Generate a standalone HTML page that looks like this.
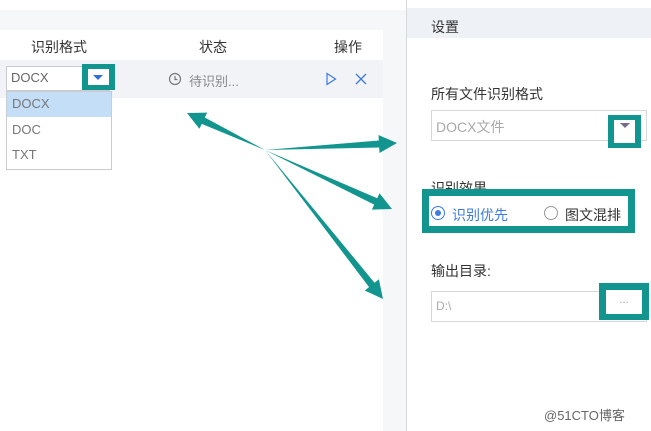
<!DOCTYPE html>
<html><head><meta charset="utf-8"><style>
*{margin:0;padding:0;box-sizing:border-box}
body{width:651px;height:431px;overflow:hidden;background:#fff;position:relative;font-family:"Liberation Sans","Noto Sans CJK SC",sans-serif;font-size:13px;color:#333}
.a{position:absolute}
</style></head><body>
<div class="a" style="left:0;top:10px;width:405px;height:20px;background:#f6f7f9"></div>
<div class="a" style="left:383px;top:10px;width:23px;height:421px;background:#f6f7f9"></div>
<div class="a" style="left:406px;top:0;width:1px;height:431px;background:#d6d8dc"></div>
<div class="a" style="left:0;top:60px;width:383px;height:38px;background:#f1f3f7"></div>
<div class="a" style="left:31px;top:37px;font-size:14px">识别格式</div>
<div class="a" style="left:199px;top:37px;font-size:14px">状态</div>
<div class="a" style="left:334px;top:37px;font-size:14px">操作</div>
<div class="a" style="left:6px;top:66px;width:104px;height:25px;background:#fff;border:1px solid #c9ccd2"></div>
<div class="a" style="left:11px;top:70px;color:#666">DOCX</div>
<div class="a" style="left:82px;top:64px;width:33px;height:26px;background:#12958f"></div>
<div class="a" style="left:88px;top:69px;width:21px;height:16px;background:#fff"></div>
<div class="a" style="left:93px;top:75px;width:0;height:0;border-left:5px solid transparent;border-right:5px solid transparent;border-top:5px solid #2f6fd8"></div>
<div class="a" style="left:6px;top:91px;width:106px;height:79px;border:1px solid #c9ccd2;background:#fff"></div>
<div class="a" style="left:7px;top:92px;width:104px;height:25px;background:#c4def7"></div>
<div class="a" style="left:12px;top:96px;color:#777">DOCX</div>
<div class="a" style="left:12px;top:122px;color:#777">DOC</div>
<div class="a" style="left:12px;top:147px;color:#777">TXT</div>
<svg class="a" style="left:168px;top:72px" width="14" height="14"><circle cx="7" cy="7" r="5.5" fill="none" stroke="#777" stroke-width="1.2"/><path d="M7 4v3.5h2.5" fill="none" stroke="#777" stroke-width="1.2"/></svg>
<div class="a" style="left:189px;top:71px;color:#888">待识别...</div>
<svg class="a" style="left:325px;top:72px" width="12" height="14"><path d="M2 1.5L10.5 7L2 12.5Z" fill="none" stroke="#3d7be0" stroke-width="1.2"/></svg>
<svg class="a" style="left:355px;top:73px" width="12" height="12"><path d="M1 1L11 11M11 1L1 11" stroke="#3d7be0" stroke-width="1.3"/></svg>
<div class="a" style="left:407px;top:8px;width:244px;height:30px;background:#eef2f7"></div>
<div class="a" style="left:431px;top:17px;font-size:14px">设置</div>
<div class="a" style="left:431px;top:84px;font-size:14px">所有文件识别格式</div>
<div class="a" style="left:431px;top:110px;width:216px;height:31px;border:1px solid #d5d7db"></div>
<div class="a" style="left:436px;top:117px;color:#aaa;font-size:14px">DOCX文件</div>
<div class="a" style="left:608px;top:115px;width:33px;height:33px;background:#12958f"></div>
<div class="a" style="left:614px;top:120px;width:21px;height:23px;background:#fff"></div>
<div class="a" style="left:620px;top:123px;border-left:5px solid transparent;border-right:5px solid transparent;border-top:5px solid #776b90"></div>
<div class="a" style="left:431px;top:178px;font-size:14px">识别效果</div>
<div class="a" style="left:422px;top:189px;width:213px;height:44px;background:#12958f"></div>
<div class="a" style="left:429px;top:196px;width:199px;height:30px;background:#fff"></div>
<div class="a" style="left:431px;top:206px;width:14px;height:14px;border-radius:50%;border:1px solid #3d7be0"></div>
<div class="a" style="left:435px;top:210px;width:6px;height:6px;border-radius:50%;background:#3d7be0"></div>
<div class="a" style="left:452px;top:205px;color:#3d7be0;font-size:14px">识别优先</div>
<div class="a" style="left:544px;top:206px;width:14px;height:14px;border-radius:50%;border:1px solid #999"></div>
<div class="a" style="left:565px;top:205px;font-size:14px">图文混排</div>
<div class="a" style="left:431px;top:261px;font-size:14px">输出目录:</div>
<div class="a" style="left:431px;top:291px;width:216px;height:31px;border:1px solid #d5d7db"></div>
<div class="a" style="left:436px;top:299px;color:#aaa;font-size:12px">D:\</div>
<div class="a" style="left:599px;top:283px;width:50px;height:37px;background:#12958f"></div>
<div class="a" style="left:606px;top:290px;width:36px;height:24px;background:#fff;text-align:center;color:#999;font-size:11px;line-height:20px">...</div>
<div class="a" style="left:544px;top:405px;color:#666;font-size:13px">@51CTO博客</div>
<svg class="a" style="left:0;top:0" width="651" height="431"><g fill="#12958f">
<polygon points="265,150 204.8,117.5 207.2,112.6 187,113 199.4,128.8 201.8,123.9"/>
<polygon points="265,150 379.2,147.5 379.5,153 397,143 378.5,135 378.8,140.5"/>
<polygon points="265,150 374.2,204.6 371.9,209.6 392,209 379.5,193.2 377.2,198.2"/>
<polygon points="265,150 369.1,287.1 364.7,290.5 383,299 378.9,279.3 374.5,282.7"/>
</g></svg>
</body></html>
